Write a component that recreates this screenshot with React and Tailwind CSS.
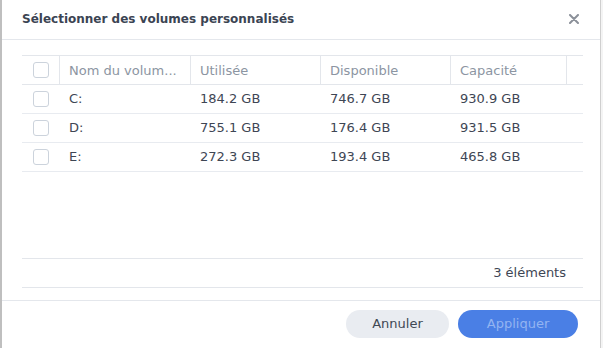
import { useState } from "react";

const volumes = [
    { name: "C:", used: "184.2 GB", free: "746.7 GB", size: "930.9 GB" },
    { name: "D:", used: "755.1 GB", free: "176.4 GB", size: "931.5 GB" },
    { name: "E:", used: "272.3 GB", free: "193.4 GB", size: "465.8 GB" },
];

function Checkbox({ checked, onChange }) {
    return (
        <button
            onClick={onChange}
            className={`w-[16px] h-[16px] rounded-[3px] border ${checked ? "border-[#4a80e6] bg-[#4a80e6]" : "border-[#ccd3dc] bg-white"}`}
        />
    );
}

export default function App() {
    const [selected, setSelected] = useState({});

    const toggle = (name) => setSelected({ ...selected, [name]: !selected[name] });
    const allChecked = volumes.every((v) => selected[v.name]);
    const toggleAll = () => {
        const next = {};
        volumes.forEach((v) => (next[v.name] = !allChecked));
        setSelected(next);
    };

    return (
        <div className="w-[603px] h-[348px] flex bg-white font-['DejaVu_Sans',sans-serif] text-[13px] text-[#3e4654] overflow-hidden">
            <div className="w-[2px] bg-[#bfbfbf]" />
            <div className="w-[598px] flex flex-col bg-white">
                {/* Header */}
                <div className="h-[40px] shrink-0 flex items-center justify-between pl-[20px] pr-[21px] border-b border-[#e4e7ec]">
                    <h1 className="text-[12px] font-bold text-[#3b4453] -mt-[2px]">Sélectionner des volumes personnalisés</h1>
                    <svg className="w-[10px] h-[10px] -mt-[1px]" viewBox="0 0 10 10" fill="none" stroke="#8b9099" strokeWidth="2" strokeLinecap="round">
                        <path d="M1 1l8 8M9 1l-8 8" />
                    </svg>
                </div>

                {/* Table */}
                <div className="flex-1 flex flex-col pl-[20px] pr-[17px] pt-[15px]">
                    <div className="h-[30px] flex items-center border-t border-b border-[#e3e6eb] text-[#8c95a2]">
                        <div className="w-[38px] h-full flex items-center pl-[11px] border-r border-[#e3e6eb]">
                            <Checkbox checked={allChecked} onChange={toggleAll} />
                        </div>
                        <div className="w-[131px] h-full flex items-center pl-[9px] pt-[1px] border-r border-[#e3e6eb]">Nom du volum...</div>
                        <div className="w-[130px] h-full flex items-center pl-[9px] pt-[1px] border-r border-[#e3e6eb]">Utilisée</div>
                        <div className="w-[130px] h-full flex items-center pl-[9px] pt-[1px] border-r border-[#e3e6eb]">Disponible</div>
                        <div className="w-[116px] h-full flex items-center pl-[9px] pt-[1px] border-r border-[#e3e6eb]">Capacité</div>
                        <div className="flex-1" />
                    </div>
                    {volumes.map((v) => (
                        <div key={v.name} className="h-[29px] flex items-center border-b border-[#e8ebf0]">
                            <div className="w-[37px] flex items-center pl-[11px]">
                                <Checkbox checked={!!selected[v.name]} onChange={() => toggle(v.name)} />
                            </div>
                            <div className="w-[131px] pl-[10px]">{v.name}</div>
                            <div className="w-[130px] pl-[10px]">{v.used}</div>
                            <div className="w-[130px] pl-[10px]">{v.free}</div>
                            <div className="w-[116px] pl-[10px]">{v.size}</div>
                        </div>
                    ))}
                    <div className="flex-1" />
                    <div className="h-[30px] mb-[12px] flex items-center justify-end pr-[17px] border-t border-b border-[#e3e6eb]">
                        3 éléments
                    </div>
                </div>

                {/* Footer */}
                <div className="h-[48px] shrink-0 flex items-start justify-end gap-[9px] pt-[9px] pr-[22px] border-t border-[#e4e7ec]">
                    <button className="w-[103px] h-[28px] rounded-full bg-[#e9ecf1] text-[#404854]">Annuler</button>
                    <button disabled className="w-[120px] h-[28px] rounded-full bg-[#4a7fe5] text-[#93b4f1]">Appliquer</button>
                </div>
            </div>
            <div className="w-[1px] bg-[#cfcfcf]" />
            <div className="w-[2px] bg-[#f4f4f4]" />
        </div>
    );
}
